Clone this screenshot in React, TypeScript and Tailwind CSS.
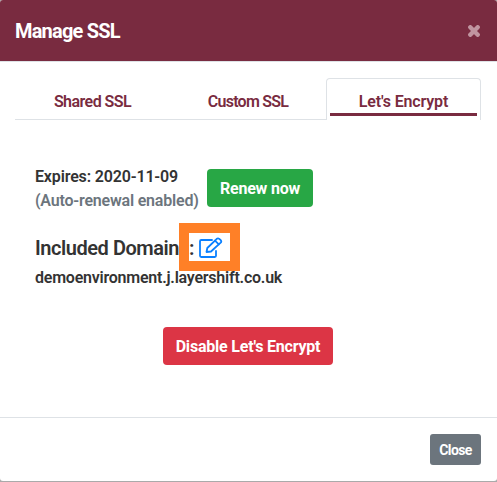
import React from "react";

const tabText = "text-center text-[16px] leading-6 font-semibold text-[#792b40]";

function EditIcon() {
  return (
    <svg className="mt-px shrink-0" width="24" height="22" viewBox="0 0 24 22" fill="none" stroke="#0a80ff" strokeWidth="1.8" strokeLinejoin="round" strokeLinecap="round">
      <path d="M13 3H2.2Q1 3 1 4.2V18.8Q1 20 2.2 20H15.8Q17 20 17 18.8V14" />
      <path d="M7.5 15L8.3 11L17.8 1.8Q19 .9 20.3 1.9L21.7 3.2Q22.8 4.4 21.7 5.6L12 14.5Z" />
      <path d="M16 3.6L19.8 7.3" />
    </svg>
  );
}

export default function App() {
  return (
    <div className="h-[482px] w-[497px] overflow-hidden bg-[#aaa] font-['Roboto','Noto_Sans',sans-serif] text-[#333]">
      <div className="flex h-[481px] flex-col overflow-hidden rounded-[3px] bg-white">
        <header className="flex h-[62px] shrink-0 items-center justify-between border-b border-[#dee2e6] bg-[#792b40] pl-[15px] pr-[17px]">
          <h1 className="text-[20px] font-bold leading-[30px] tracking-[-0.8px] text-white">Manage SSL</h1>
          <svg width="12" height="12" viewBox="0 0 12 12" stroke="#c095a0" strokeWidth="4.4" strokeLinecap="round">
            <path d="M2.3 2.3L9.7 9.7M9.7 2.3L2.3 9.7" />
          </svg>
        </header>
        <main className="flex h-[355px] shrink-0 flex-col px-[15px] pt-4">
          <nav className="grid h-[42px] shrink-0 grid-cols-[155px_156px_155px]">
            <div className={"border-b border-[#dee2e6] pt-[12px] tracking-[-0.55px] " + tabText}>Shared SSL</div>
            <div className={"border-b border-[#dee2e6] pt-[12px] tracking-[-0.75px] " + tabText}>Custom SSL</div>
            <div className={"flex flex-col rounded-t border border-b-0 border-[#dee2e6] px-[3px] pt-[11px] tracking-[-0.15px] " + tabText}>
              <span>Let's Encrypt</span>
              <span className="-mt-px h-[3px] bg-[#792b40]" />
            </div>
          </nav>
          <section className="px-5 pt-[45px]">
            <div className="flex h-[48px] gap-2 text-[16px] font-semibold leading-6">
              <div className="w-[164px] whitespace-nowrap">
                <p className="tracking-[-0.15px]">Expires: 2020-11-09</p>
                <p className="tracking-[-0.2px] text-[#6c757d]">(Auto-renewal enabled)</p>
              </div>
              <button className="mt-[4px] h-[38px] w-[106px] rounded bg-[#28a745] pt-px text-[16px] font-bold tracking-[-0.2px] text-white">Renew now</button>
            </div>
            <div className="mt-[10px] flex h-[48px] items-center whitespace-nowrap text-[20px] font-semibold">
              <h2 className="w-[144px] pt-[2px] tracking-[-0.45px]">Included Domain</h2>
              <div className="relative flex h-[48px] w-[61px] items-center border-10 border-[#ff8027] bg-white">
                <span className="w-[10px] shrink-0 pt-px">:</span>
                <EditIcon />
              </div>
            </div>
            <p className="-mt-[5px] text-[16px] font-semibold leading-6 tracking-[-0.23px]">demoenvironment.j.layershift.co.uk</p>
          </section>
          <button className="-ml-px mt-[37px] h-[38px] w-[170px] self-center rounded bg-[#dc3545] pt-px text-[16px] font-bold tracking-[-0.2px] text-white">Disable Let's Encrypt</button>
        </main>
        <footer className="flex h-[64px] shrink-0 items-center justify-end border-t border-[#dee2e6] pr-4">
          <button className="h-[31px] w-[51px] rounded-[3px] bg-[#6c757d] pt-px text-[14px] font-bold tracking-[-0.6px] text-white">Close</button>
        </footer>
      </div>
    </div>
  );
}
